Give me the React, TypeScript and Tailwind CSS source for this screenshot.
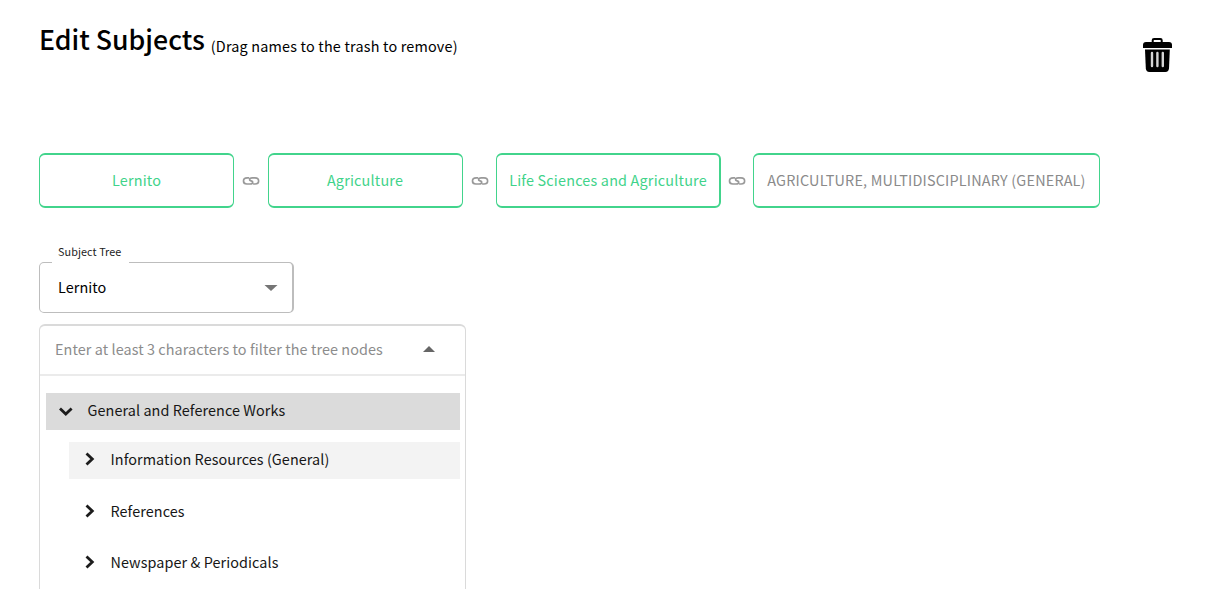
import React from "react";

const chips = [
  { label: "Lernito", box: "w-[195px] border-x", text: "text-[#3fd38a]" },
  { label: "Agriculture", box: "w-[195px] border-x pr-px", text: "text-[#3fd38a]" },
  { label: "Life Sciences and Agriculture", box: "w-[225px] border-l border-r-2", text: "text-[#3fd38a]" },
  { label: "AGRICULTURE, MULTIDISCIPLINARY (GENERAL)", box: "w-[347px] border-x", text: "text-[#8a8a8a]" },
];

const nodes = [
  { label: "Information Resources (General)", row: "mt-3 bg-[#f3f3f3]" },
  { label: "References", row: "mt-[15px]" },
  { label: "Newspaper & Periodicals", row: "mt-[14px]" },
];

function LinkIcon() {
  return (
    <svg viewBox="0 0 18 10" className="h-[10px] w-[18px] shrink-0" fill="none" stroke="#999" strokeWidth="1.7">
      <path d="M7.200 1.800H5.200C3 1.800 1.500 3.200 1.500 5S2.800 8 4.800 8H8c1.700 0 2.700-1 2.700-2.100C10.700 4.700 7.600 5.100 7.600 3.900 7.600 2.700 8.700 1.800 10.300 1.800h2.700c2.200 0 3.600 1.300 3.600 3.200S15.100 8 13 8h-1.900" />
    </svg>
  );
}

function TrashIcon() {
  return (
    <svg viewBox="0 0 30 36" className="h-9 w-[30px]">
      <path d="M9.700 5V3.200Q9.700 2 11.100 2h6.200Q18.700 2 18.700 3.200V5" fill="none" stroke="#000" strokeWidth="2" />
      <path d="M3 5h23q3 0 3 3v2.900H0V8q0-3 3-3Z" />
      <path d="M2 12.500h24.800l-.8 18.800q-.2 3.700-3.600 3.700H6.400Q3 35 2.800 31.300Z" />
      <path d="M9 16v13M14.400 16v13M19.800 16v13" stroke="#d6d6d6" strokeWidth="2.400" strokeLinecap="round" />
    </svg>
  );
}

function Chevron({ down = false }: { down?: boolean }) {
  return (
    <svg viewBox="0 0 14 14" className="h-[14px] w-[14px] shrink-0" fill="none" stroke="#1c1c1c" strokeWidth="2.800">
      <path d={down ? "M1 4.500 6.800 10l5.800-5.500" : "M3.500 1.500 9.300 7 3.500 12.500"} />
    </svg>
  );
}

export default function App() {
  return (
    <div className="flex h-[589px] w-[1222px] flex-col overflow-hidden bg-white pl-[39px] font-['Noto_Sans_CJK_SC',sans-serif] text-[14.4px] leading-6 tracking-[0.08px] text-black">
      <header className="flex h-[153px] shrink-0 justify-between pr-[49px]">
        <div className="flex items-start gap-[6px] pt-[19px]">
          <h1 className="text-[26.7px] leading-10 font-medium tracking-normal whitespace-nowrap">Edit Subjects</h1>
          <span className="pt-[15px] tracking-[0.19px] whitespace-nowrap">(Drag names to the trash to remove)</span>
        </div>
        <button className="mt-[37px] h-9" aria-label="Remove"><TrashIcon /></button>
      </header>

      <div className="flex h-[55px] shrink-0 items-center tracking-[0.19px]">
        {chips.map((c, i) => (
          <React.Fragment key={c.label}>
            {i > 0 && <div className={i === 1 ? "flex w-[34px] justify-center" : i === 2 ? "flex w-[33px] justify-center" : "flex w-8 justify-center"}><LinkIcon /></div>}
            <div className={`flex h-full items-center justify-center rounded-md border-y-2 border-[#42d48c] pb-px whitespace-nowrap ${c.box} ${c.text}`}>
              {c.label}
            </div>
          </React.Fragment>
        ))}
      </div>

      <div className="relative mt-[54px] flex h-[51px] w-[255px] shrink-0 items-center justify-between rounded-[5px] border border-r-2 border-[#bdbdbd] pr-[14px] pl-[18px]">
        <span className="absolute -top-[21px] left-3 h-[22px] w-[77px] bg-white pl-[6px] text-[10.8px] leading-[19px] whitespace-nowrap text-[#222]">Subject Tree</span>
        <span className="pb-[2px]">Lernito</span>
        <svg viewBox="0 0 14 6" className="h-[6px] w-[14px]" fill="#757575"><path d="M.5 0h13L7 6Z" /></svg>
      </div>

      <div className="mt-[11px] flex h-[280px] w-[427px] shrink-0 flex-col rounded-t-[6px] border-x border-t-2 border-[#dadada]">
        <div className="flex h-[50px] shrink-0 items-center justify-between border-b-2 border-[#ebebeb] pr-[30px] pb-[3px] pl-[15px]">
          <span className="text-[#8c8c8c]">Enter at least 3 characters to filter the tree nodes</span>
          <svg viewBox="0 0 12 6" className="h-[6px] w-3" fill="#666"><path d="M0 6h12L6 0Z" /></svg>
        </div>
        <div className="flex flex-col pt-[17px] pr-[5px] pl-[6px]">
          <div className="flex h-[37px] items-center gap-[14.500px] bg-[#dbdbdb] pb-px pl-[13px] text-[#161616]">
            <Chevron down /><span className="pb-[2px]">General and Reference Works</span>
          </div>
          <div className="flex flex-col pl-[23px]">
            {nodes.map((n) => (
              <div key={n.label} className={`flex h-[37px] items-center gap-[13.500px] pb-[3px] pl-[14px] text-[#161616] ${n.row}`}>
                <Chevron /><span>{n.label}</span>
              </div>
            ))}
          </div>
        </div>
      </div>
    </div>
  );
}
